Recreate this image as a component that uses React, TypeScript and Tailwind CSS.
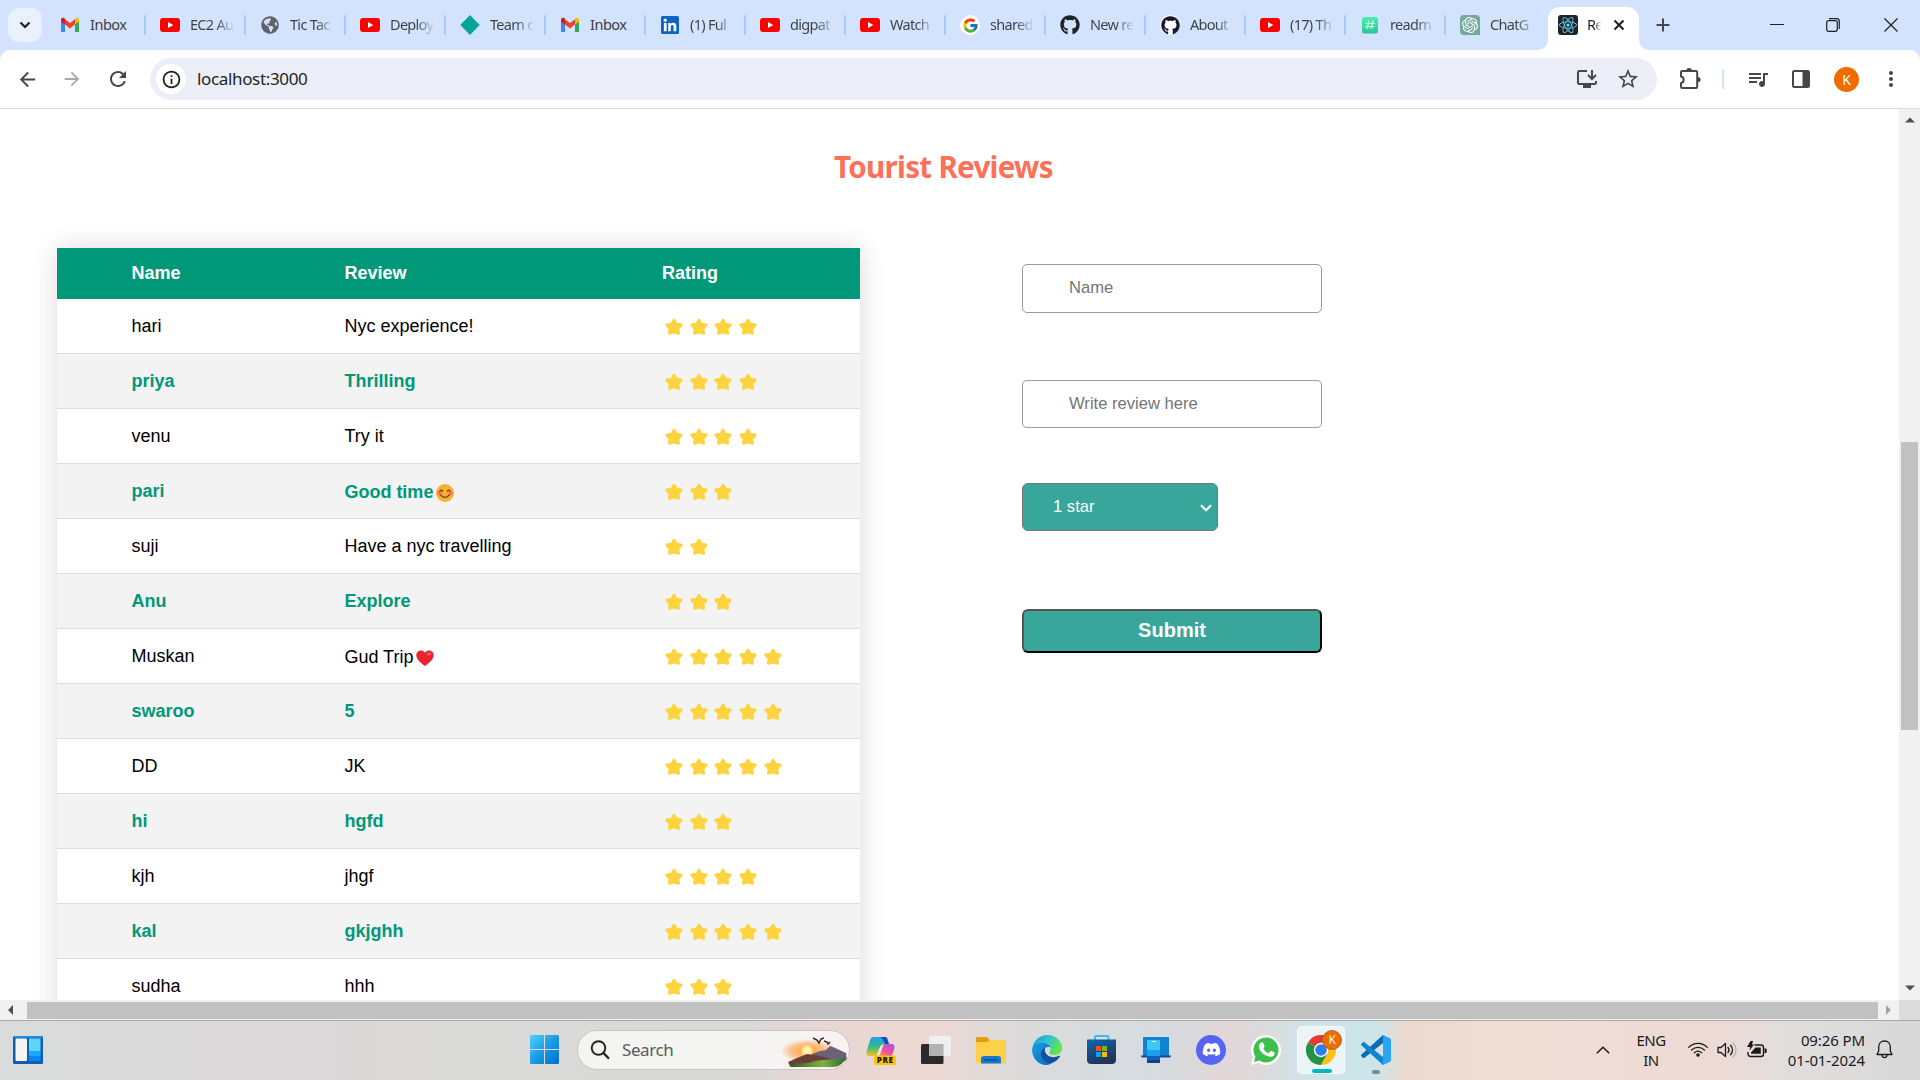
import React from "react";
import { FaGithub, FaReact, FaDiscord, FaGlobeAmericas } from "react-icons/fa";
import { SiOpenai } from "react-icons/si";
import { FcGoogle } from "react-icons/fc";
import {
  MdArrowBack,
  MdArrowForward,
  MdRefresh,
  MdInfoOutline,
  MdStarBorder,
  MdQueueMusic,
  MdMoreVert,
} from "react-icons/md";

const Gmail = () => (
  <svg viewBox="0 0 20 20" className="size-5">
    <path d="M1 5v11.2c0 .5.4.8.8.8H5V9z" fill="#4285f4" />
    <path d="M15 9v8h3.2c.5 0 .8-.3.8-.8V5z" fill="#34a853" />
    <path d="M15 4.4V9.6L19 6.6V5c0-2-2.2-2.9-3.6-1.8z" fill="#fbbc04" />
    <path d="M5 9.6V4.2l5 3.8 5-3.8v5.4l-5 3.8z" fill="#ea4335" />
    <path d="M1 5v1.6l4 3V4.2l-.4-.9C3.100 2.200 1 3 1 5z" fill="#c5221f" />
  </svg>
);

const Youtube = () => (
  <svg viewBox="0 0 20 20" className="size-5">
    <rect x="0" y="3" width="20" height="14" rx="3" fill="#ff0000" />
    <path d="M8 7l5.300 3L8 13z" fill="#fff" />
  </svg>
);

const Diamond = () => (
  <svg viewBox="0 0 20 20" className="size-5">
    <path d="M10 0l9.700 10L10 20 .3 10z" fill="#06a59a" />
  </svg>
);

const LinkedIn = () => (
  <svg viewBox="0 0 20 20" className="size-5">
    <rect x="1" y="1" width="18" height="18" rx="1.500" fill="#0a66c2" />
    <circle cx="5.200" cy="5.200" r="1.600" fill="#fff" />
    <path d="M3.900 7.900h2.700v8.300H3.900zM8.200 7.900h2.500v1.200c.6-.9 1.500-1.400 2.600-1.400 2.300 0 3 1.500 3 3.700v4.800h-2.700v-4.300c0-1.100-.2-1.900-1.300-1.900-1.100 0-1.500.8-1.500 1.900v4.300H8.200z" fill="#fff" />
  </svg>
);

const HashFile = () => (
  <svg viewBox="0 0 20 20" className="size-5">
    <defs>
      <linearGradient id="hash" x1="0" y1="0" x2="0" y2="1">
        <stop offset="0" stopColor="#48f0b0" />
        <stop offset="1" stopColor="#2ac493" />
      </linearGradient>
    </defs>
    <rect x="2" y="2" width="16" height="16.500" rx="2.500" fill="url(#hash)" />
    <path d="M8.800 5.500l-1.600 8.500M12.900 5.500L11.300 14M5.400 8.300h9.400M4.900 11.600h9.400" stroke="#c8fbe5" strokeWidth="1.300" />
  </svg>
);

const tabs: { label: string; icon: React.ReactNode }[] = [
  { label: "Inbox", icon: <Gmail /> },
  { label: "EC2 Au", icon: <Youtube /> },
  { label: "Tic Tac", icon: <FaGlobeAmericas className="size-[18px] text-[#5f6368]" /> },
  { label: "Deploy", icon: <Youtube /> },
  { label: "Team c", icon: <Diamond /> },
  { label: "Inbox", icon: <Gmail /> },
  { label: "(1) Ful", icon: <LinkedIn /> },
  { label: "digpat", icon: <Youtube /> },
  { label: "Watch", icon: <Youtube /> },
  {
    label: "shared",
    icon: (
      <span className="flex size-5 items-center justify-center rounded-full bg-white">
        <FcGoogle className="size-[17px]" />
      </span>
    ),
  },
  { label: "New re", icon: <FaGithub className="size-5 text-[#1f2328]" /> },
  {
    label: "About",
    icon: (
      <span className="flex size-5 items-center justify-center rounded-full bg-white">
        <FaGithub className="size-[19px] text-[#15192a]" />
      </span>
    ),
  },
  { label: "(17) Th", icon: <Youtube /> },
  { label: "readm", icon: <HashFile /> },
  {
    label: "ChatG",
    icon: (
      <span className="flex size-5 items-center justify-center rounded-[4px] rounded-br-none bg-[#74aa9c]">
        <SiOpenai className="size-4 text-white" />
      </span>
    ),
  },
];

function TabStrip() {
  return (
    <div className="flex h-[50px] shrink-0 bg-[#d3e3fd]">
      <div className="flex w-[46px] items-center pl-2">
        <button className="flex h-[34px] w-[34px] items-center justify-center rounded-[11px] bg-[#e9f1fe]">
          <svg viewBox="0 0 12 8" className="h-[8px] w-[12px]">
            <path d="M1.500 1.500L6 6l4.500-4.500" fill="none" stroke="#1f1f1f" strokeWidth="2.200" />
          </svg>
        </button>
      </div>
      {tabs.map((t, i) => (
        <div key={i} className={i === 14 ? "flex w-[92px] items-center" : "flex w-[100px] items-center"}>
          <div className="flex flex-1 items-center pl-[14px]">
            <span className="flex size-5 shrink-0 items-center justify-center">{t.icon}</span>
            <span
              className={
                t.label === "Inbox"
                  ? "ml-[10px] w-[42px] overflow-hidden text-[14.500px] tracking-[-0.500px] whitespace-nowrap text-[#3c4043]"
                  : "ml-[10px] w-[43px] overflow-hidden bg-linear-to-r from-[#3c4043] from-60% to-[#3c4043]/10 bg-clip-text text-[14.500px] tracking-[-0.700px] whitespace-nowrap text-transparent"
              }
            >
              {t.label}
            </span>
          </div>
          {i < 14 && <span className="h-5 w-[2px] rounded-full bg-[#a8c7fa]" />}
        </div>
      ))}
      <div className="flex items-end">
        <div className="h-[10px] w-[10px] bg-white">
          <div className="size-full rounded-br-[10px] bg-[#d3e3fd]" />
        </div>
        <div className="flex h-[43px] w-[91px] items-center rounded-t-[12px] bg-white pb-[7px] pl-[10px]">
          <span className="flex size-5 items-center justify-center rounded-[3px] bg-[#20232a]">
            <FaReact className="size-[18px] text-[#61dafb]" />
          </span>
          <span className="ml-[9px] w-[14px] overflow-hidden bg-linear-to-r from-[#1f1f1f] from-50% to-[#1f1f1f]/10 bg-clip-text text-[14.500px] tracking-[-0.700px] text-transparent">
            Re
          </span>
          <svg viewBox="0 0 12 12" className="ml-[12px] size-3">
            <path d="M1.500 1.500l9 9m0-9l-9 9" stroke="#1f1f1f" strokeWidth="2" />
          </svg>
        </div>
        <div className="h-[10px] w-[10px] bg-white">
          <div className="size-full rounded-bl-[10px] bg-[#d3e3fd]" />
        </div>
      </div>
      <svg viewBox="0 0 14 14" className="mt-[18px] ml-[7px] size-[14px]">
        <path d="M7 .5v13M.5 7h13" stroke="#474747" strokeWidth="2" />
      </svg>
      <div className="ml-auto flex items-center">
        <svg viewBox="0 0 14 14" className="mr-[42px] size-[14px]">
          <path d="M0 6.500h14" stroke="#1f1f1f" strokeWidth="1" />
        </svg>
        <svg viewBox="0 0 14 14" className="mr-[44px] size-[14px]">
          <rect x=".7" y="2.700" width="10.600" height="10.600" rx="2" fill="none" stroke="#1f1f1f" strokeWidth="1.200" />
          <path d="M3 .7h7.500a2.800 2.800 0 012.800 2.800V11" fill="none" stroke="#1f1f1f" strokeWidth="1.200" />
        </svg>
        <svg viewBox="0 0 14 14" className="mr-[22px] size-[14px]">
          <path d="M.5.500l13 13m0-13l-13 13" stroke="#1f1f1f" strokeWidth="1.200" />
        </svg>
      </div>
    </div>
  );
}

const InstallIcon = () => (
  <svg viewBox="0 0 22 20" className="ml-auto h-[20px] w-[22px]">
    <path d="M11 2H3.200C2.500 2 2 2.500 2 3.200v10.600c0 .7.5 1.200 1.200 1.200h15.600c.7 0 1.200-.5 1.200-1.200V12" fill="none" stroke="#474747" strokeWidth="2" />
    <path d="M7 15.500h8V19H7z" fill="#474747" />
    <path d="M16 1v8.500M12 6l4 4 4-4" fill="none" stroke="#474747" strokeWidth="2" />
  </svg>
);

const PuzzleIcon = () => (
  <svg viewBox="0 0 22 22" className="ml-[22px] size-[22px] shrink-0">
    <path
      d="M2 4.200C2 3.500 2.500 3 3.200 3H17c.7 0 1.200.5 1.200 1.200v14.600c0 .7-.5 1.200-1.200 1.200H3.200C2.500 20 2 19.500 2 18.800V15c3.500-.5 3.500-6 0-6.500z"
      fill="none"
      stroke="#474747"
      strokeWidth="2"
      strokeLinejoin="round"
    />
    <path d="M7.200 3a2.900 2.900 0 015.800 0zM19 9a2.600 2.600 0 010 5.200z" fill="#474747" />
  </svg>
);

function Toolbar() {
  return (
    <div className="h-[59px] shrink-0 bg-[#d3e3fd]">
      <div className="flex h-[59px] items-center rounded-t-[10px] border-b border-[#dcdcdc] bg-white text-[#474747]">
        <MdArrowBack className="ml-[16px] size-[23px]" />
        <MdArrowForward className="ml-[22px] size-[22px] text-[#a8a8a8]" />
        <MdRefresh className="ml-[23px] size-6" />
        <div className="ml-[20px] flex h-[42px] w-[1507px] items-center rounded-full bg-[#ebeef7]">
          <span className="ml-[6px] flex size-[30px] items-center justify-center rounded-full bg-white">
            <MdInfoOutline className="size-[21px] text-[#1f1f1f]" />
          </span>
          <span className="ml-[11px] text-[17px] tracking-[-0.35px] text-[#1f1f1f]">localhost:3000</span>
          <InstallIcon />
          <MdStarBorder className="mr-[17px] ml-[18px] size-[24px]" />
        </div>
        <PuzzleIcon />
        <span className="ml-[21px] h-5 w-[2px] bg-[#d3e3fd]" />
        <MdQueueMusic className="ml-[22px] size-6" />
        <svg viewBox="0 0 18 18" className="ml-[22px] size-[18px]">
          <rect x="1" y="1" width="16" height="16" rx="1.500" fill="none" stroke="#474747" strokeWidth="2" />
          <path d="M10.500 1H17v16h-6.500z" fill="#474747" />
        </svg>
        <span className="ml-[24px] flex size-[25px] items-center justify-center rounded-full bg-[#ef6c00] text-[14px] text-white">
          K
        </span>
        <MdMoreVert className="ml-[20px] size-6" />
      </div>
    </div>
  );
}

const Blush = () => (
  <svg viewBox="0 0 18 18" className="ml-[3px] inline-block size-[18px] align-[-4px]">
    <circle cx="9" cy="9" r="9" fill="#fdb02f" />
    <circle cx="3.600" cy="9.200" r="2.200" fill="#f9744a" />
    <circle cx="14.400" cy="9.200" r="2.200" fill="#f9744a" />
    <path d="M3.800 7.300c.6-1.600 2.400-1.600 3 0M11.200 7.300c.6-1.600 2.400-1.600 3 0M4.800 11.200c1.900 2.900 6.500 2.900 8.400 0" fill="none" stroke="#5b3a20" strokeWidth="1.200" strokeLinecap="round" />
  </svg>
);

const Heart = () => (
  <svg viewBox="0 0 18 18" className="ml-[3px] inline-block size-[18px] align-[-4px]">
    <path d="M9 17C4 13.500.3 10 .3 6 .3 1.500 6.500-.3 9 3.700 11.500-.3 17.700 1.500 17.700 6c0 4-3.700 7.500-8.700 11z" fill="#e8252f" />
    <ellipse cx="13" cy="5" rx="2.500" ry="1.700" fill="#f2505c" />
  </svg>
);

const Star = () => (
  <svg viewBox="0 0 18 18" className="h-[18px] w-[18px]">
    <path
      d="M9 2.200L11.200 6.200 16.200 7 12.800 10.600 13.500 15.300 9 13.800 4.500 15.300 5.200 10.600 1.800 7 6.800 6.200z"
      fill="#fdd43f"
      stroke="#fdd43f"
      strokeWidth="3"
      strokeLinejoin="round"
    />
  </svg>
);

const reviews: { name: string; text: string; stars: number; emoji?: React.ReactNode }[] = [
  { name: "hari", text: "Nyc experience!", stars: 4 },
  { name: "priya", text: "Thrilling", stars: 4 },
  { name: "venu", text: "Try it", stars: 4 },
  { name: "pari", text: "Good time", stars: 3, emoji: <Blush /> },
  { name: "suji", text: "Have a nyc travelling", stars: 2 },
  { name: "Anu", text: "Explore", stars: 3 },
  { name: "Muskan", text: "Gud Trip", stars: 5, emoji: <Heart /> },
  { name: "swaroo", text: "5", stars: 5 },
  { name: "DD", text: "JK", stars: 5 },
  { name: "hi", text: "hgfd", stars: 3 },
  { name: "kjh", text: "jhgf", stars: 4 },
  { name: "kal", text: "gkjghh", stars: 5 },
  { name: "sudha", text: "hhh", stars: 3 },
];

function ReviewTable() {
  return (
    <div className="mt-[139px] ml-[57px] h-[900px] w-[803px] shrink-0 text-[18px] shadow-[0_0_25px_rgba(0,0,0,0.15)]">
      <div className="grid h-[51px] grid-cols-[213px_317.500px_1fr] items-center bg-[#009879] pl-[74.400px] font-bold text-white">
        <span>Name</span>
        <span>Review</span>
        <span>Rating</span>
      </div>
      {reviews.map((r, i) => (
        <div
          key={i}
          className={
            i % 2
              ? "grid h-[55px] grid-cols-[213px_317.500px_1fr] items-center border-b border-[#dddddd] bg-[#f3f3f3] pl-[74.400px] font-bold text-[#009879]"
              : "grid h-[55px] grid-cols-[213px_317.500px_1fr] items-center border-b border-[#dddddd] bg-white pl-[74.400px] text-black"
          }
        >
          <span>{r.name}</span>
          <span className={r.emoji ? "pt-[2px]" : ""}>
            {r.text}
            {r.emoji}
          </span>
          <span className="flex gap-[6.700px] pt-[1px] pl-[3px]">
            {Array.from({ length: r.stars }, (_, k) => (
              <Star key={k} />
            ))}
          </span>
        </div>
      ))}
    </div>
  );
}

function ReviewForm() {
  return (
    <div className="mt-[155px] ml-[162px] flex w-[300px] shrink-0 flex-col items-start">
      <input
        placeholder="Name"
        className="h-[49px] w-[300px] rounded-[5px] border border-[#9b9b9b] bg-white pb-[1px] pl-[46px] text-[16.600px] placeholder:text-[#757575]"
      />
      <input
        placeholder="Write review here"
        className="mt-[67px] h-[48px] w-[300px] rounded-[5px] border border-[#9b9b9b] bg-white pl-[46px] text-[16.600px] placeholder:text-[#757575]"
      />
      <div className="mt-[55px] flex h-[48px] w-[196px] items-center justify-between rounded-[6px] border border-[#767676] bg-[#38a69a] pr-[5px] pl-[30px] text-[16.600px] text-white">
        <span>1 star</span>
        <svg viewBox="0 0 12 8" className="mt-[2px] h-[8px] w-[12px]">
          <path d="M1 1.200l5 5 5-5" fill="none" stroke="#fff" strokeWidth="2.200" />
        </svg>
      </div>
      <button className="mt-[78px] h-[44px] w-[300px] rounded-[6px] border-2 border-t-[#555] border-r-black border-b-black border-l-[#555] bg-[#38a69a] pb-[3px] text-[20px] font-bold text-white">
        Submit
      </button>
    </div>
  );
}

const Arrow = ({ d, color }: { d: string; color: string }) => (
  <svg viewBox="0 0 10 10" className="size-[10px]">
    <path d={d} fill={color} />
  </svg>
);

function Page() {
  return (
    <div className="flex h-[891px] shrink-0">
      <div className="relative flex w-[1899px] items-start overflow-hidden bg-white font-['Liberation_Sans',Arial,sans-serif]">
        <h1 className="absolute top-[34px] left-[834px] font-['Noto_Sans','Open_Sans',sans-serif] text-[29.500px] leading-[48px] font-bold tracking-[-0.680px] whitespace-nowrap text-[#ff7059]">
          Tourist Reviews
        </h1>
        <ReviewTable />
        <ReviewForm />
      </div>
      <div className="flex w-[21px] flex-col items-center bg-[#f1f1f1]">
        <div className="flex h-[22px] items-center">
          <Arrow d="M0 7.500L5 2.500l5 5z" color="#505050" />
        </div>
        <div className="mt-[311px] h-[288px] w-[17px] bg-[#c1c1c1]" />
        <div className="mt-auto flex h-[24px] items-center">
          <Arrow d="M0 2.500l5 5 5-5z" color="#505050" />
        </div>
      </div>
    </div>
  );
}

function HorizontalScroll() {
  return (
    <div className="flex h-[21px] shrink-0 items-center border-b border-[#a9a9a9] bg-[#f1f1f1]">
      <div className="flex w-[27px] items-center pl-[6px]">
        <Arrow d="M7 0L2 5l5 5z" color="#505050" />
      </div>
      <div className="mt-px h-[17px] w-[1851px] bg-[#c1c1c1]" />
      <div className="flex w-[21px] items-center pl-[5px]">
        <Arrow d="M3 0l5 5-5 5z" color="#a3a3a3" />
      </div>
      <div className="h-full flex-1 bg-[#dcdcdc]" />
    </div>
  );
}

const Widgets = () => (
  <svg viewBox="0 0 30 28" className="h-[28px] w-[30px]">
    <rect width="30" height="28" rx="1.500" fill="#0f5db5" />
    <rect width="30" height="2" rx="1" fill="#1c8be0" />
    <rect x="2.500" y="2.500" width="11.500" height="22.500" rx="1" fill="#f5f5f5" />
    <rect x="16" y="2.500" width="11.500" height="12.500" fill="#62d5fb" />
    <rect x="16" y="15" width="11.500" height="5" fill="#1ea7fd" />
    <rect x="16" y="20" width="11.500" height="5" fill="#0a85f0" />
  </svg>
);

const StartLogo = () => (
  <svg viewBox="0 0 29 29" className="size-[29px]">
    <defs>
      <linearGradient id="win" x1="0" y1="0" x2="1" y2="1">
        <stop offset="0" stopColor="#4fd3ff" />
        <stop offset=".5" stopColor="#1b9ae4" />
        <stop offset="1" stopColor="#0070cc" />
      </linearGradient>
    </defs>
    <path d="M1 0h13v14H0V1zM15 0h13l1 1v13H15zM0 15h14v14H1l-1-1zM15 15h14v13l-1 1H15z" fill="url(#win)" />
  </svg>
);

const SearchScene = () => (
  <svg viewBox="0 0 66 36" className="h-[36px] w-[66px]">
    <defs>
      <radialGradient id="sun" cx=".42" cy=".5" r=".5">
        <stop offset="0" stopColor="#ff9a2e" />
        <stop offset=".6" stopColor="#fdb777" stopOpacity=".8" />
        <stop offset="1" stopColor="#fbe3d0" stopOpacity="0" />
      </radialGradient>
      <linearGradient id="hill" x1="0" y1="0" x2="1" y2="0">
        <stop offset="0" stopColor="#2f5c1e" />
        <stop offset=".6" stopColor="#7fb143" />
        <stop offset="1" stopColor="#2e6f2f" />
      </linearGradient>
    </defs>
    <ellipse cx="31" cy="19" rx="31" ry="13" fill="url(#sun)" />
    <circle cx="25" cy="19" r="5.800" fill="#ffe27a" />
    <circle cx="25" cy="19" r="3.500" fill="#fff3b5" />
    <path d="M30 22l8-3 6-1 4-4 3 1 13 6 1 7-8 4H30z" fill="#6e6076" />
    <path d="M6 30l9-4 10-4 8 1 9 2 10 3 8 1-8 5H8z" fill="#6b3f38" />
    <path d="M8 33c10-3 16-1 22-3 8-3 20-2 33-4-2 6-6 9-12 9H10c-2 0-3-1-2-2z" fill="url(#hill)" />
    <path d="M31 6l4 2 2 3 2-4 3-1M42 9l3 1 1 2 2-2" fill="none" stroke="#3a2522" strokeWidth="1.500" />
  </svg>
);

const Copilot = () => (
  <svg viewBox="0 0 30 30" className="size-[30px]">
    <defs>
      <linearGradient id="copA" x1="0" y1="0" x2="0" y2="1">
        <stop offset="0" stopColor="#1d9df0" />
        <stop offset=".5" stopColor="#35b78a" />
        <stop offset="1" stopColor="#f2c41a" />
      </linearGradient>
      <linearGradient id="copB" x1="1" y1="0" x2="0" y2="1">
        <stop offset="0" stopColor="#a74df0" />
        <stop offset=".6" stopColor="#f0569b" />
        <stop offset="1" stopColor="#ff9a4a" />
      </linearGradient>
    </defs>
    <path d="M8 2h11c1.500 0 2 1 2.500 2.500L23 9h-4c-2 0-3 1-3.600 3L13 19c-.4 1.200-1 2-2.500 2H4c-3 0-4-2-3.200-5L4 5c.6-2 2-3 4-3z" fill="url(#copA)" />
    <path d="M14 2h5c1.500 0 2 1 2.500 2.500L23 9h-4c-1.500-3-2-6-5-7z" fill="#1748c0" />
    <path d="M19 9h6c3 0 4 2 3.300 4.500L26 21H12c1.500 0 2-1 2.400-2l2-7c.5-2 1.200-3 2.600-3z" fill="url(#copB)" />
    <path d="M17.500 9.500L13 20.500h-2.500l3.500-8.500c.7-1.600 1.600-2.500 3.500-2.500z" fill="#f5e6e4" />
    <rect x="8" y="20.500" width="22" height="9.500" rx="2" fill="#ffc400" />
    <text x="19.200" y="28" textAnchor="middle" fontSize="8" fontWeight="800" fill="#1a1a1a" letterSpacing=".6" fontFamily="Open Sans, sans-serif">
      PRE
    </text>
  </svg>
);

const TaskView = () => (
  <svg viewBox="0 0 30 28" className="h-[28px] w-[30px]">
    <rect x="0" y="8" width="22.500" height="20" rx="1.500" fill="#2b2b2b" />
    <rect x="8" y="0" width="22" height="20" rx="1.500" fill="#f1f0f0" />
    <rect x="8" y="8" width="14.500" height="12" fill="#b4b1b1" />
  </svg>
);

const Explorer = () => (
  <svg viewBox="0 0 30 28" className="h-[28px] w-[30px]">
    <path d="M0 2.500C0 1.500.6 1 1.500 1H10c1 0 1.500.4 2 1l1.500 2H30v8H0z" fill="#dda00f" />
    <path d="M0 6h11l3-2h14.500c1 0 1.500.5 1.500 1.500v21c0 .5-.3 1-1 1H1c-.6 0-1-.4-1-1z" fill="#fdd04a" />
    <path d="M5 27.500V23c0-2 1-3 3-3h14c2 0 3 1 3 3v4.500z" fill="#1478ce" />
    <path d="M9 24h12" stroke="#0c4d92" strokeWidth="1.500" strokeLinecap="round" />
  </svg>
);

const Edge = () => (
  <svg viewBox="0 0 30 30" className="size-[30px]">
    <defs>
      <linearGradient id="edA" x1="0" y1="0" x2="1" y2=".5">
        <stop offset="0" stopColor="#1b96d8" />
        <stop offset=".5" stopColor="#2fc4cf" />
        <stop offset="1" stopColor="#62e64e" />
      </linearGradient>
      <linearGradient id="edB" x1="0" y1="0" x2="1" y2="1">
        <stop offset="0" stopColor="#1ba0e2" />
        <stop offset="1" stopColor="#0a63bd" />
      </linearGradient>
    </defs>
    <path d="M.5 12C2 5 8 0 15 0c9 0 15 6 15 13 0 4.500-3.500 7-7.500 7-3.500 0-5.200-1.200-5.200-2.200 0-.8 1.200-1.300 1.200-3.600C18.500 10 14 7.500 9.500 7.500 5 7.500 1.500 10 .5 12z" fill="url(#edA)" />
    <path d="M.2 13.500C1 9.500 5 7.500 9.500 7.500c4.500 0 8 2 9 5-3-1.500-6.500.5-6.500 4.500 0 6 5 9.500 10 9-2 2.500-4.500 4-8 4C6 30-.8 22 .2 13.500z" fill="url(#edB)" />
    <path d="M12.500 13C9 15 8.500 19 10 22.500c2 4.500 7 6.500 11 5 3-1 5.500-3.500 7-6 .3-.6 0-1-.7-.7-6.500 3-12 .7-13.800-3-.8-1.800-.6-3.300-1-4.800z" fill="#11509c" />
  </svg>
);

const Store = () => (
  <svg viewBox="0 0 29 29" className="size-[29px]">
    <defs>
      <linearGradient id="sto" x1="0" y1="0" x2=".4" y2="1">
        <stop offset="0" stopColor="#0d66b5" />
        <stop offset="1" stopColor="#213459" />
      </linearGradient>
    </defs>
    <path d="M8 6V2.200C8 1.400 8.500 1 9.200 1h11c.8 0 1.300.4 1.300 1.200V6" fill="none" stroke="#2cc0f5" strokeWidth="2" />
    <path d="M0 4.500h29V25c0 2.500-1.500 4-4 4H4c-2.500 0-4-1.500-4-4z" fill="url(#sto)" />
    <path d="M9 11h5v5H9z" fill="#f25022" />
    <path d="M15 11h5v5h-5z" fill="#7fba00" />
    <path d="M9 17h5v5H9z" fill="#00a4ef" />
    <path d="M15 17h5v5h-5z" fill="#ffb900" />
  </svg>
);

const PhoneLink = () => (
  <svg viewBox="0 0 30 28" className="h-[28px] w-[30px]">
    <path d="M2 2c0-.6.400-1 1-1h24c.6 0 1 .4 1 1v18H2z" fill="#1181d4" />
    <path d="M0 19.500h30c0 1.500-.7 2-2 2H2c-1.300 0-2-.5-2-2z" fill="#0d4f97" />
    <rect x="6" y="4" width="13" height="23" rx="1" fill="#1ea0e8" />
    <rect x="6" y="4" width="13" height="10" rx="1" fill="#3cc7f5" />
    <rect x="6" y="20" width="13" height="4" fill="#0a63be" />
    <rect x="6" y="24" width="13" height="3" fill="#17407c" />
    <path d="M11 5.500h4" stroke="#e5f8ff" strokeWidth="1" />
  </svg>
);

const WhatsApp = () => (
  <svg viewBox="0 0 30 30" className="size-[30px]">
    <path d="M0 30l2-7.500A15 15 0 117.500 28z" fill="#fff" />
    <circle cx="15" cy="15" r="12.500" fill="#3cc04b" />
    <path d="M3 27l1.600-6 4 4.500z" fill="#3cc04b" />
    <path d="M10.500 7.500c.7-.3 1.400-.2 1.800.6l1.200 2.700c.3.700 0 1.300-.9 2.300-.3.400-.2.700.1 1.200 1.100 1.700 2.500 2.900 4.300 3.700.5.200.8.200 1.100-.2l1.100-1.400c.4-.5.800-.5 1.300-.3l2.600 1.300c.6.300.7.600.6 1.200-.4 2.600-3 3.700-5.500 3C13 20.500 9 16.500 8 12.500c-.5-2 .7-4.400 2.500-5z" fill="#fff" />
  </svg>
);

const Chrome = () => (
  <svg viewBox="0 0 48 48" className="size-[30px]">
    <path d="M24 24L3.200 12A24 24 0 0144.800 12z" fill="#e33b2e" />
    <path d="M24 24L3.200 12A24 24 0 0024 48l10.400-18z" fill="#229342" />
    <path d="M24 24V12h20.800A24 24 0 0124 48l10.400-18z" fill="#fbc116" />
    <circle cx="24" cy="24" r="11.500" fill="#fff" />
    <circle cx="24" cy="24" r="9.300" fill="#2f7de9" />
  </svg>
);

const VsCode = () => (
  <svg viewBox="0 0 30 30" className="size-[30px]">
    <path d="M22 0v8L3.500 22.800c-.5.400-1 .4-1.500 0L.500 21.400c-.6-.6-.6-1.300 0-1.800z" fill="#0a6db5" />
    <path d="M22 30v-8L3.500 7.200c-.5-.4-1-.4-1.500 0L.500 8.600c-.6.6-.6 1.300 0 1.800z" fill="#1283cd" />
    <path d="M22 0l7 3.200c.6.300 1 .8 1 1.500v20.600c0 .7-.4 1.200-1 1.500L22 30c-.8.300-1.500 0-2-.5 1 .5 2 0 2-1.200V1.700C22 .5 21 0 20 .5c.5-.5 1.200-.8 2-.5z" fill="#2aa5f2" />
  </svg>
);

function Taskbar() {
  return (
    <div className="flex flex-1 items-center bg-[linear-gradient(90deg,#dadbdb_0px,#dbd9da_240px,#dadad8_480px,#d9d9d8_740px,#e8d6d4_830px,#edd9d3_930px,#dbdada_1020px,#d5dce0_1150px,#e2d6d8_1230px,#dcdadc_1260px,#cfe4e8_1310px,#cbe5ea_1375px,#ebd9d0_1405px,#f0ddd6_1500px,#eddad5_1720px,#e0dedd_1790px,#d8d8d8_1920px)] pb-[2px] text-[#1b1b1b]">
      <div className="ml-[13px] w-[517px]">
        <Widgets />
      </div>
      <StartLogo />
      <div className="ml-[18px] flex h-[40px] w-[273px] items-center overflow-hidden rounded-full border border-[#c9c7c6] bg-white/70 pl-[12px]">
        <svg viewBox="0 0 20 20" className="size-[20px]">
          <circle cx="8.500" cy="8" r="6.800" fill="none" stroke="#222" strokeWidth="1.900" />
          <path d="M13.500 13l4.800 5" stroke="#222" strokeWidth="2.400" strokeLinecap="round" />
        </svg>
        <span className="ml-[12px] text-[17px] tracking-[-0.400px] text-[#5b5b5b]">Search</span>
        <div className="mr-[1px] ml-auto">
          <SearchScene />
        </div>
      </div>
      <div className="ml-[16px] flex items-center gap-[25.200px]">
        <Copilot />
        <TaskView />
        <Explorer />
        <Edge />
        <Store />
        <PhoneLink />
        <span className="flex size-[30px] items-center justify-center rounded-full bg-[#5865f2]">
          <FaDiscord className="size-[19px] text-white" />
        </span>
        <WhatsApp />
      </div>
      <div className="relative ml-[16px] flex size-[48px] items-center justify-center rounded-[5px] border border-white/60 bg-white/60">
        <Chrome />
        <span className="absolute top-[3px] left-[24px] flex size-[20px] items-center justify-center rounded-full border border-[#a5683a] bg-[#ef6c00] text-[12px] text-[#fff2e5]">
          K
        </span>
        <span className="absolute bottom-0 left-[14px] h-[4px] w-[20px] rounded-full bg-[#00b7c3]" />
      </div>
      <div className="relative ml-[16px]">
        <VsCode />
        <span className="absolute -bottom-[9px] left-[11px] h-[4px] w-[8px] rounded-full bg-[#7f8a8c]" />
      </div>
      <div className="ml-auto flex items-center">
        <svg viewBox="0 0 14 8" className="mr-[26px] h-[8px] w-[14px]">
          <path d="M.8 7.200L7 1.200l6.200 6" fill="none" stroke="#1b1b1b" strokeWidth="1.500" />
        </svg>
        <div className="mr-[22px] w-[30px] text-center text-[15px] leading-[20px] tracking-[-0.500px]">
          ENG
          <br />
          IN
        </div>
        <svg viewBox="0 0 20 15" className="mr-[9px] h-[15px] w-[20px]">
          <g fill="none" stroke="#1b1b1b" strokeWidth="1.300" strokeLinecap="round">
            <path d="M.8 5.200c5.300-5 13.100-5 18.400 0M3.600 8c3.700-3.500 9.100-3.500 12.800 0M6.400 10.700c2.200-2 5-2 7.200 0" />
          </g>
          <circle cx="10" cy="13" r="1.800" fill="#1b1b1b" />
        </svg>
        <svg viewBox="0 0 20 16" className="mr-[10px] h-[16px] w-[20px]">
          <path d="M1 5.500h3L8.500 1.500v13L4 10.500H1z" fill="none" stroke="#1b1b1b" strokeWidth="1.300" strokeLinejoin="round" />
          <path d="M11 5.500c1.300 1.500 1.300 3.500 0 5M13.500 3.200c2.700 2.800 2.700 6.800 0 9.600" fill="none" stroke="#1b1b1b" strokeWidth="1.300" strokeLinecap="round" />
          <path d="M16 1c4 4 4 10 0 14" fill="none" stroke="#b5aeac" strokeWidth="1.300" strokeLinecap="round" />
        </svg>
        <svg viewBox="0 0 20 17" className="mr-[18px] h-[17px] w-[20px]">
          <path d="M7.500 4H14c1.500 0 2.500 1 2.500 2.500V13c0 1.500-1 2.500-2.500 2.500H3.500C2 15.500 1 14.500 1 13v-2" fill="none" stroke="#1b1b1b" strokeWidth="1.400" />
          <path d="M17.500 7.500h1c.8 0 1.200.5 1.200 1.200v2c0 .8-.4 1.300-1.200 1.300h-1zM8.500 6.500h5.300v6.300H4V11.500zM3.500 0H6L5 3.500h2L2.500 9.500 3 6H0z" fill="#1b1b1b" />
        </svg>
        <div className="mr-[11px] w-[80px] text-right text-[15px] leading-[20px] tracking-[-0.100px] whitespace-nowrap">
          09:26 PM
          <br />
          01-01-2024
        </div>
        <svg viewBox="0 0 17 19" className="mr-[27px] h-[19px] w-[17px]">
          <path d="M8.500 1C5 1 2.700 3.600 2.700 7v4L1 14.500h15L14.300 11V7c0-3.400-2.300-6-5.800-6zM6 15c.3 3.500 4.700 3.500 5 0" fill="none" stroke="#1b1b1b" strokeWidth="1.300" strokeLinejoin="round" />
        </svg>
      </div>
    </div>
  );
}

export default function App() {
  return (
    <div className="flex h-[1080px] w-[1920px] flex-col overflow-hidden bg-white font-['Noto_Sans','Open_Sans',sans-serif]">
      <TabStrip />
      <Toolbar />
      <Page />
      <HorizontalScroll />
      <Taskbar />
    </div>
  );
}
